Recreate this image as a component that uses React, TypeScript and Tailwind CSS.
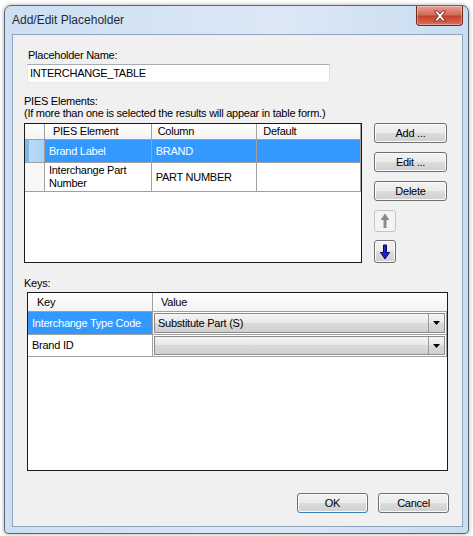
import React from "react";

const font = { fontFamily: '"Liberation Sans", Arial, sans-serif' };

const btn =
  "flex items-center justify-center rounded-[3px] border border-[#707070] bg-[linear-gradient(#f2f2f2,#ebebeb_50%,#dddddd_50%,#cfcfcf)] shadow-[inset_0_0_0_1px_#fbfbfb] text-[11px] tracking-[-0.25px] text-black";

function UpArrow() {
  return (
    <svg width="10" height="16" viewBox="0 0 10 16">
      <path d="M5 0.5 L9.5 7 L6.5 7 L6.5 15 L3.5 15 L3.5 7 L0.5 7 Z" fill="#8a8a8a" />
    </svg>
  );
}

function DownArrow() {
  return (
    <svg width="10" height="16" viewBox="0 0 10 16">
      <path
        d="M3.5 1 L6.5 1 L6.5 8.5 L9.5 8.5 L5 15 L0.5 8.5 L3.5 8.5 Z"
        fill="#1f1fe0"
        stroke="#0a0a40"
        strokeWidth="1"
        strokeLinejoin="round"
      />
    </svg>
  );
}

function Combo({ value }: { value: string }) {
  return (
    <div className="m-[1px] flex flex-1 items-stretch border border-[#8a8a8a] bg-[linear-gradient(#f4f4f4,#e8e8e8_50%,#dadada_50%,#d0d0d0)]">
      <div className="flex flex-1 items-center pl-[3px]">{value}</div>
      <div className="flex w-[16px] items-center justify-center border-l border-[#9a9a9a]">
        <svg width="7" height="4" viewBox="0 0 7 4">
          <path d="M0 0 L7 0 L3.5 4 Z" fill="#000" />
        </svg>
      </div>
    </div>
  );
}

export default function App() {
  const headCell =
    "flex items-center border-r border-[#a0a0a0] pl-[8px] bg-[linear-gradient(#ffffff,#f3f3f3)]";
  const cell = "flex items-center border-r border-[#a0a0a0] pl-[4px]";

  return (
    <div
      className="flex h-[536px] w-[473px] bg-white pb-[2px] pl-[4px] pr-[4px] pt-[5px] text-black"
      style={font}
    >
      <div className="flex flex-1 flex-col rounded-t-[7px] rounded-b-[4px] border border-[#5c6670] bg-[linear-gradient(90deg,#cddff2,#dce8f6_60%,#c9dcf0)] pb-[6px] pl-[7px] pr-[5px] shadow-[0_0_4px_rgba(0,0,0,0.35)]">
        {/* title bar */}
        <div className="flex h-[28px] items-start justify-between">
          <div className="pt-[7px] text-[12px] leading-[14px] text-[#1e2a3a]">Add/Edit Placeholder</div>
          <div className="flex h-[20px] w-[47px] items-center justify-center rounded-b-[4px] border border-t-0 border-[#6b2b24] bg-[linear-gradient(#e8a093,#d46a58_45%,#c4402b_55%,#d5735d)] shadow-[inset_0_0_0_1px_rgba(255,255,255,0.35)]">
            <svg width="14" height="12" viewBox="0 0 14 12">
              <path
                d="M1.5 1 L4.5 1 L7 4 L9.5 1 L12.5 1 L8.6 6 L12.5 11 L9.5 11 L7 8 L4.5 11 L1.5 11 L5.4 6 Z"
                fill="#fff"
                stroke="#5a2018"
                strokeWidth="0.8"
                strokeLinejoin="round"
              />
            </svg>
          </div>
        </div>

        {/* client area */}
        <div className="flex flex-1 flex-col border border-[#8ea4bd] bg-[#f0f0f0] text-[11px] tracking-[-0.25px]">
          <div className="ml-[15px] mt-[14px] h-[13px] leading-[13px]">Placeholder Name:</div>
          <div className="ml-[14px] mt-[2px] flex h-[19px] w-[303px] items-center border border-[#abadb3] border-b-[#e3e9ef] border-r-[#dbdfe6] border-l-[#e2e3ea] bg-white pl-[2px]">
            INTERCHANGE_TABLE
          </div>
          <div className="ml-[11px] mt-[12px] leading-[12px]">
            <div>PIES Elements:</div>
            <div>(If more than one is selected the results will appear in table form.)</div>
          </div>

          <div className="ml-[11px] mt-[4px] flex gap-[12px]">
            {/* PIES grid */}
            <div className="flex h-[140px] w-[338px] flex-col border border-[#1a1a1a] bg-white">
              <div className="flex h-[16px] border-b border-[#a0a0a0]">
                <div className="w-[20px] border-r border-[#a0a0a0] bg-[linear-gradient(#ffffff,#f3f3f3)]" />
                <div className={`${headCell} w-[107px]`}>PIES Element</div>
                <div className={`${headCell} w-[106px] !pl-[6px]`}>Column</div>
                <div className={`${headCell} w-[104px] !pl-[6px]`}>Default</div>
              </div>
              <div className="flex h-[23px] border-b border-[#a0a0a0]">
                <div className="w-[20px] border-r border-[#a0a0a0] bg-[linear-gradient(90deg,#7fb8e6_0px,#7fb8e6_4px,#b7dbf6_4px,#a9d3f3)]" />
                <div className={`${cell} w-[107px] bg-[#3399ff] text-white`}>Brand Label</div>
                <div className={`${cell} w-[106px] bg-[#3399ff] text-white`}>BRAND</div>
                <div className={`${cell} w-[104px] bg-[#3399ff] text-white`} />
              </div>
              <div className="flex h-[29px] border-b border-[#a0a0a0]">
                <div className="w-[20px] border-r border-[#a0a0a0] bg-[#f7f7f7]" />
                <div className={`${cell} w-[107px] leading-[13px]`}>
                  Interchange Part
                  <br />
                  Number
                </div>
                <div className={`${cell} w-[106px]`}>PART NUMBER</div>
                <div className={`${cell} w-[104px]`} />
              </div>
            </div>

            <div className="flex flex-col">
              <div className={`${btn} h-[20px] w-[73px]`}>Add ...</div>
              <div className={`${btn} mt-[9px] h-[20px] w-[73px]`}>Edit ...</div>
              <div className={`${btn} mt-[9px] h-[20px] w-[73px]`}>Delete</div>
              <div className="mt-[9px] flex h-[22px] w-[22px] items-center justify-center rounded-[3px] border border-[#c2c5c8] bg-[#f4f4f4]">
                <UpArrow />
              </div>
              <div className={`${btn} mt-[8px] h-[23px] w-[22px]`}>
                <DownArrow />
              </div>
            </div>
          </div>

          <div className="ml-[11px] mt-[14px] h-[12px] leading-[12px]">Keys:</div>

          {/* Keys grid */}
          <div className="ml-[14px] mt-[3px] flex h-[179px] w-[421px] flex-col border border-[#1a1a1a] bg-white">
            <div className="flex h-[19px] border-b border-[#a0a0a0] bg-[linear-gradient(#ffffff,#f3f3f3)]">
              <div className="flex w-[125px] items-center border-r border-[#a0a0a0] pl-[9px]">Key</div>
              <div className="flex flex-1 items-center pl-[8px]">Value</div>
            </div>
            <div className="flex h-[23px] border-b border-[#a0a0a0]">
              <div className={`${cell} w-[125px] bg-[#3399ff] text-white`}>Interchange Type Code</div>
              <div className="flex flex-1 border-r border-[#a0a0a0]">
                <Combo value="Substitute Part (S)" />
              </div>
            </div>
            <div className="flex h-[22px] border-b border-[#a0a0a0]">
              <div className={`${cell} w-[125px]`}>Brand ID</div>
              <div className="flex flex-1 border-r border-[#a0a0a0]">
                <Combo value="" />
              </div>
            </div>
          </div>

          <div className="mr-[13px] mt-[22px] flex justify-end gap-[10px]">
            <div className={`${btn} h-[20px] w-[71px] !border-[#3c7fb1] shadow-[inset_0_0_0_1px_#bfe3f7]`}>OK</div>
            <div className={`${btn} h-[20px] w-[71px]`}>Cancel</div>
          </div>
        </div>
      </div>
    </div>
  );
}
